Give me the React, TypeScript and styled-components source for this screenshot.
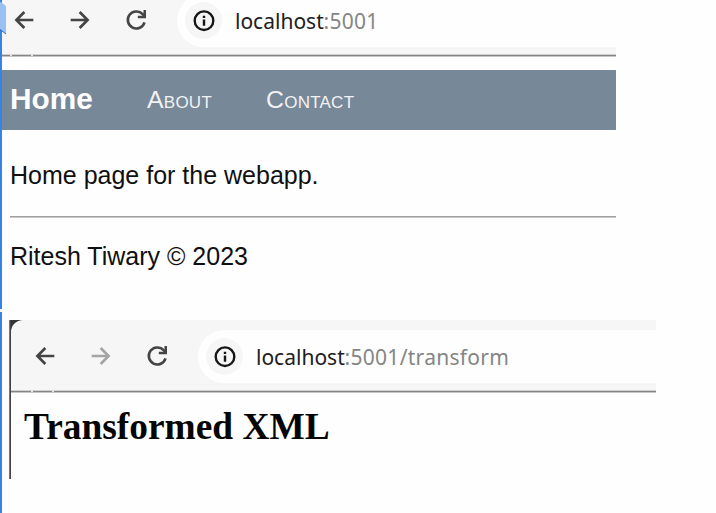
import React from "react";
import styled, { createGlobalStyle } from "styled-components";

const GlobalStyle = createGlobalStyle`
  body { margin: 0; background: #fff; overflow: hidden; }
`;

const Canvas = styled.div`
  display: flex;
  position: relative;
  width: 716px;
  height: 513px;
  overflow: hidden;
  background: #fefefe;
`;

const Rail = styled.div`
  display: flex;
  flex-direction: column;
  gap: 3px;
  flex: 0 0 2px;
`;

const RailPart = styled.div<{ $height: number }>`
  flex: 0 0 ${(p) => p.$height}px;
  background: #3584e4;
`;

const EdgeTab = styled.svg`
  position: absolute;
  left: 0;
  top: 0;
`;

const Content = styled.main`
  flex: 1;
`;

const HomeWindow = styled.section`
  width: 613.6px;
`;

const TransformWindow = styled.section`
  display: flex;
  width: 646.6px;
  height: 160px;
  margin: 49px 0 0 7px;
`;

const WindowEdge = styled.div`
  flex: 0 0 2px;
  height: 159px;
  background: linear-gradient(to right, #77777b 50%, #434347 50%);
`;

const WindowBody = styled.div`
  flex: 1;
  background: #333338;
  height: 72px;
`;

const Toolbar = styled.header<{ $second?: boolean }>`
  box-sizing: border-box;
  display: flex;
  align-items: center;
  height: ${(p) => (p.$second ? 70 : 54)}px;
  padding: ${(p) => (p.$second ? "3px 0 0 20px" : "0 0 13px 8px")};
  overflow: hidden;
  background: #f6f6f6;
  border-top-left-radius: ${(p) => (p.$second ? 12 : 0)}px;
`;

const NavIcon = styled.svg<{ $faded?: boolean }>`
  flex: 0 0 28px;
  width: 28px;
  height: 28px;
  margin: 0 28px 1px 0;
  color: ${(p) => (p.$faded ? "#a5a5a5" : "#454545")};
`;

const AddressBar = styled.div`
  box-sizing: border-box;
  display: flex;
  align-items: center;
  flex: 1;
  height: 53px;
  margin-left: -1px;
  padding-left: 8px;
  border-radius: 27px 0 0 27px;
  background: #fefefe;
`;

const InfoBadge = styled.span`
  display: flex;
  align-items: center;
  justify-content: center;
  width: 37px;
  height: 37px;
  margin-right: 13px;
  border-radius: 50%;
  background: #f6f6f6;
`;

const Url = styled.span`
  display: flex;
  font: 21px/28px "Noto Sans", sans-serif;
  white-space: pre;
`;

const Host = styled.span`
  width: 88.5px;
  color: #202020;
`;

const Path = styled.span`
  color: #858585;
  letter-spacing: 0.29px;
`;

const Divider = styled.div<{ $inset?: boolean }>`
  height: 3px;
  margin-bottom: ${(p) => (p.$inset ? 0 : 13)}px;
  background:
    linear-gradient(#e3e3e3, #e3e3e3) ${(p) => (p.$inset ? 20 : 8)}px 0 / 2px 2px no-repeat,
    linear-gradient(#e3e3e3, #e3e3e3) ${(p) => (p.$inset ? 41 : 29)}px 0 / 2px 2px no-repeat,
    linear-gradient(#d0d0d0 0 1px, #858585 1px 2px, #c5c5c5 2px 3px);
`;

const SiteNav = styled.nav`
  box-sizing: border-box;
  display: flex;
  align-items: center;
  height: 60px;
  padding-left: 8px;
  background: #778899;
  font-family: "Liberation Sans", Arial, sans-serif;
  color: #f2f2f2;
`;

const CurrentLink = styled.span`
  width: 137px;
  font-size: 29.8px;
  font-weight: 700;
  line-height: 36px;
  margin-top: -2px;
  color: #fff;
`;

const NavLink = styled.span`
  width: 119px;
  margin-top: -1px;
  font-size: 24.8px;
  line-height: 34px;
  font-variant: small-caps;
  letter-spacing: 0.25px;
`;

const Page = styled.div`
  padding-left: 8px;
  font: 25px/30px "Liberation Sans", Arial, sans-serif;
  color: #101010;
`;

const Message = styled.p`
  margin: 0;
  padding-top: 30px;
`;

const Rule = styled.hr`
  height: 2px;
  margin: 26px 0 23px;
  border: 0;
  background: linear-gradient(#a0a0a0 50%, #c8c8c8 50%);
`;

const Footer = styled.footer`
  height: 30px;
`;

const Result = styled.div`
  height: 90px;
  background: #fefefe;
`;

const Title = styled.h1`
  margin: 0;
  padding: 12px 0 0 13px;
  font: 700 37.4px/44px "Liberation Serif", "Times New Roman", serif;
  color: #050505;
`;

function BackIcon() {
  return (
    <NavIcon viewBox="0 0 24 24">
      <path d="M20 12H6M12.3 5.2 5.5 12l6.8 6.8" fill="none" stroke="currentColor" strokeWidth="2.3" />
    </NavIcon>
  );
}

function ForwardIcon({ faded }: { faded?: boolean }) {
  return (
    <NavIcon viewBox="0 0 24 24" $faded={faded}>
      <path d="M4 12h14M11.7 5.2l6.8 6.8-6.8 6.8" fill="none" stroke="currentColor" strokeWidth="2.3" />
    </NavIcon>
  );
}

function ReloadIcon() {
  return (
    <NavIcon viewBox="0 0 28 28">
      <path d="M22.5 16.3A8.5 8.5 0 1 1 20.6 8.2L22.4 10.1" fill="none" stroke="currentColor" strokeWidth="2.6" />
      <path d="M21.5 4H24v8.2h-8.2V9.7h5.7Z" fill="currentColor" />
    </NavIcon>
  );
}

function BrowserToolbar({ path, second }: { path: string; second?: boolean }) {
  return (
    <Toolbar $second={second}>
      <BackIcon />
      <ForwardIcon faded={second} />
      <ReloadIcon />
      <AddressBar>
        <InfoBadge>
          <svg width="22" height="22" viewBox="0 0 22 22">
            <circle cx="11" cy="10.7" r="9.3" fill="none" stroke="#171717" strokeWidth="2.4" />
            <path d="M9.8 9.5h2.4v6.3H9.8zM9.8 5.7h2.4V8H9.8z" fill="#171717" />
          </svg>
        </InfoBadge>
        <Url>
          <Host>localhost</Host>
          <Path>{path}</Path>
        </Url>
      </AddressBar>
    </Toolbar>
  );
}

export default function App() {
  return (
    <>
      <GlobalStyle />
      <Canvas>
        <Rail>
          <RailPart $height={309} />
          <RailPart $height={201} />
        </Rail>
        <Content>
          <HomeWindow>
            <BrowserToolbar path=":5001" />
            <Divider />
            <SiteNav>
              <CurrentLink>Home</CurrentLink>
              <NavLink>About</NavLink>
              <NavLink>Contact</NavLink>
            </SiteNav>
            <Page>
              <Message>Home page for the webapp.</Message>
              <Rule />
              <Footer>Ritesh Tiwary © 2023</Footer>
            </Page>
          </HomeWindow>
          <TransformWindow>
            <WindowEdge />
            <WindowBody>
              <BrowserToolbar path=":5001/transform" second />
              <Divider $inset />
              <Result>
                <Title>Transformed XML</Title>
              </Result>
            </WindowBody>
          </TransformWindow>
        </Content>
        <EdgeTab width="7" height="35" viewBox="0 0 7 35">
          <path d="M0 1.5 6 6v28L0 29.5Z" fill="#99c1f1" />
          <path d="m0 29.5 6 4.5" fill="none" stroke="#3568ad" />
        </EdgeTab>
      </Canvas>
    </>
  );
}
